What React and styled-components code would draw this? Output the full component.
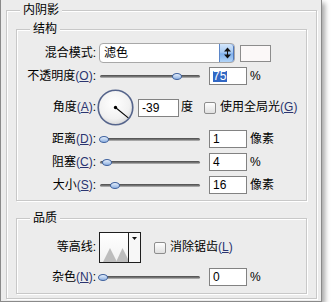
import React from 'react';
import styled, { createGlobalStyle } from 'styled-components';

const BG = '#ececec';

const GlobalStyle = createGlobalStyle`
  html, body { margin: 0; padding: 0; background: #fff; }
  body {
    font-family: "Liberation Sans", "Noto Sans CJK SC", sans-serif;
    font-size: 12px;
    color: #000;
  }
`;

const Panel = styled.div`
  width: 322px;
  box-sizing: border-box;
  background: ${BG};
  border: 1px solid #8a8a8a;
  border-top: none;
  box-shadow: 3px 3px 5px rgba(0, 0, 0, 0.35);
  padding: 10px 4px 2px 5px;
`;

const Group = styled.div`
  display: flex;
  flex-direction: column;
  border: 1px solid #c8c8c8;
  box-shadow: inset 1px 1px 0 #fff, 1px 1px 0 #fff;
  padding: 0 ${p => p.$px || 0}px ${p => p.$pb || 0}px;
  margin-top: ${p => p.$mt || 0}px;
`;

const Legend = styled.div`
  align-self: flex-start;
  height: 15px;
  line-height: 15px;
  margin: -8px 0 0 ${p => p.$indent}px;
  padding: 0 3px;
  background: ${BG};
  white-space: nowrap;
`;

const Row = styled.div`
  display: flex;
  align-items: center;
  height: ${p => p.$h || 20}px;
  margin-top: ${p => (p.$mt === undefined ? 3 : p.$mt)}px;
`;

const Label = styled.div`
  width: 79px;
  flex: none;
  text-align: right;
  white-space: nowrap;
  line-height: 15px;
`;

const Mn = styled.span`
  color: #2a3470;
  u { text-decoration: underline; text-underline-offset: 1px; }
`;

const Select = styled.div`
  margin-left: 3px;
  width: 136px;
  height: 20px;
  box-sizing: border-box;
  display: flex;
  border: 1px solid #a8a8a8;
  border-radius: 4px;
  background: #fff;
  overflow: hidden;
`;

const SelectText = styled.div`
  flex: 1;
  padding-left: 4px;
  line-height: 18px;
`;

const SelectBtn = styled.div`
  width: 14px;
  border-left: 1px solid #5b86c8;
  border-radius: 0 3px 3px 0;
  background: linear-gradient(#d3e6fb, #a9cbf3 45%, #7fb0ec 55%, #b3d5f8);
  box-shadow: inset -1px 0 0 #4f78bd;
  display: flex;
  align-items: center;
  justify-content: center;
`;

const Swatch = styled.div`
  margin-left: 5px;
  width: 31px;
  height: 17px;
  box-sizing: border-box;
  border: 1px solid #8c8c8c;
  background: #fbf8f8;
`;

const SliderBox = styled.div`
  position: relative;
  margin-left: 4px;
  width: 100px;
  height: 20px;
  flex: none;
  display: flex;
  align-items: center;
`;

const Track = styled.div`
  width: 100%;
  height: 3px;
  border-radius: 2px;
  background: linear-gradient(#4a4a4a, #777 55%, #c2c2c2);
`;

const Thumb = styled.div`
  position: absolute;
  top: 7px;
  width: 8px;
  height: 5px;
  margin-left: -5px;
  border-radius: 50%;
  border: 1px solid #3f629f;
  background: linear-gradient(#e4eefb, #90b2e2);
  box-sizing: content-box;
`;

const Input = styled.div`
  margin-left: ${p => (p.$ml === undefined ? 9 : p.$ml)}px;
  width: ${p => p.$w || 38}px;
  height: 18px;
  flex: none;
  box-sizing: border-box;
  border: 1px solid #828282;
  background: #fff;
  padding-left: 3px;
  line-height: 16px;
  font-size: 12px;
  display: flex;
  align-items: center;
`;

const Selected = styled.span`
  display: inline-block;
  background: #3167c4;
  color: #fff;
  height: 11px;
  line-height: 11px;
  padding: 0 1px 0 0;
`;

const Unit = styled.div`
  margin-left: ${p => (p.$ml === undefined ? 3 : p.$ml)}px;
  white-space: nowrap;
  line-height: 15px;
`;

const Dial = styled.svg`
  margin-left: 1px;
  flex: none;
  display: block;
`;

const Check = styled.div`
  margin-left: ${p => p.$ml}px;
  width: 12px;
  height: 12px;
  flex: none;
  box-sizing: border-box;
  border: 1px solid #8d8d8d;
  border-radius: 2px;
  background: linear-gradient(#fefefe, #e0e0e0);
`;

const Contour = styled.div`
  margin-left: 3px;
  width: 42px;
  height: 31px;
  flex: none;
  box-sizing: border-box;
  border: 1px solid #1e1e1e;
  display: flex;
  background: #fff;
`;

const ContourPreview = styled.div`
  width: 28px;
  border-right: 1px solid #1e1e1e;
  background: linear-gradient(#ffffff, #f2f2f2);
  display: flex;
`;

const ContourArrow = styled.div`
  flex: 1;
  background: #f7f7f7;
  display: flex;
  justify-content: center;
  padding-top: 4px;
`;

const Arrows = () => (
  <svg width="7" height="12" viewBox="0 0 7 12">
    <polygon points="0,4.5 3.5,0.5 7,4.5" fill="#111" />
    <rect x="3" y="4" width="1" height="4" fill="#111" />
    <polygon points="0,7.5 3.5,11.5 7,7.5" fill="#111" />
  </svg>
);

const M = ({ k }) => (
  <Mn>
    (<u>{k}</u>)
  </Mn>
);

const Slider = ({ pos }) => (
  <SliderBox>
    <Track />
    <Thumb style={{ left: `${pos - 100}px` }} />
  </SliderBox>
);

const lowerRows = [
  { label: '距离', k: 'D', pos: 103.5, value: '1', unit: '像素' },
  { label: '阻塞', k: 'C', pos: 106.5, value: '4', unit: '%' },
  { label: '大小', k: 'S', pos: 114.5, value: '16', unit: '像素' },
];

const angle = -39;
const rad = (angle * Math.PI) / 180;
const cx = 18;
const cy = 18;
const lx = cx + Math.cos(rad) * 16;
const ly = cy - Math.sin(rad) * 16;

export default function App() {
  return (
    <>
      <GlobalStyle />
      <Panel>
        <Group $px={9} $pb={4}>
          <Legend $indent={4}>内阴影</Legend>
          <Group $mt={11} $pb={5}>
            <Legend $indent={13}>结构</Legend>
            <Row $mt={6}>
              <Label>混合模式:</Label>
              <Select>
                <SelectText>滤色</SelectText>
                <SelectBtn>
                  <Arrows />
                </SelectBtn>
              </Select>
              <Swatch />
            </Row>
            <Row>
              <Label>
                不透明度<M k="O" />:
              </Label>
              <Slider pos={177} />
              <Input>
                <Selected>75</Selected>
              </Input>
              <Unit>%</Unit>
            </Row>
            <Row $h={37}>
              <Label>
                角度<M k="A" />:
              </Label>
              <Dial width="37" height="37" viewBox="0 0 36 36">
                <defs>
                  <radialGradient id="dialg" cx="45%" cy="38%" r="65%">
                    <stop offset="0%" stopColor="#ffffff" />
                    <stop offset="70%" stopColor="#f1f1f1" />
                    <stop offset="100%" stopColor="#d6d6d6" />
                  </radialGradient>
                </defs>
                <circle cx={cx} cy={cy} r="16.8" fill="url(#dialg)" stroke="#56658c" strokeWidth="1.6" />
                <line x1={cx} y1={cy} x2={lx} y2={ly} stroke="#000" strokeWidth="1.1" />
                <circle cx={cx} cy={cy} r="1.6" fill="#000" />
              </Dial>
              <Input $ml={4} $w={41}>-39</Input>
              <Unit $ml={2}>度</Unit>
              <Check $ml={11} />
              <Unit $ml={4}>
                使用全局光<M k="G" />
              </Unit>
            </Row>
            {lowerRows.map(r => (
              <Row key={r.k}>
                <Label>
                  {r.label}
                  <M k={r.k} />:
                </Label>
                <Slider pos={r.pos} />
                <Input>{r.value}</Input>
                <Unit>{r.unit}</Unit>
              </Row>
            ))}
          </Group>
          <Group $mt={17} $pb={6}>
            <Legend $indent={13}>品质</Legend>
            <Row $mt={6} $h={31}>
              <Label>等高线:</Label>
              <Contour>
                <ContourPreview>
                  <svg width="28" height="29" viewBox="0 0 28 29">
                    <polygon points="3,29 10,15 17,29" fill="#bdbdbd" />
                    <polygon points="16,29 22.5,15 28,26 28,29" fill="#bdbdbd" />
                  </svg>
                </ContourPreview>
                <ContourArrow>
                  <svg width="5" height="3" viewBox="0 0 5 3">
                    <polygon points="0,0 5,0 2.5,3" fill="#111" />
                  </svg>
                </ContourArrow>
              </Contour>
              <Check $ml={13} />
              <Unit $ml={4}>
                消除锯齿<M k="L" />
              </Unit>
            </Row>
            <Row $mt={4}>
              <Label>
                杂色<M k="N" />:
              </Label>
              <Slider pos={102.5} />
              <Input>0</Input>
              <Unit>%</Unit>
            </Row>
          </Group>
        </Group>
      </Panel>
    </>
  );
}
